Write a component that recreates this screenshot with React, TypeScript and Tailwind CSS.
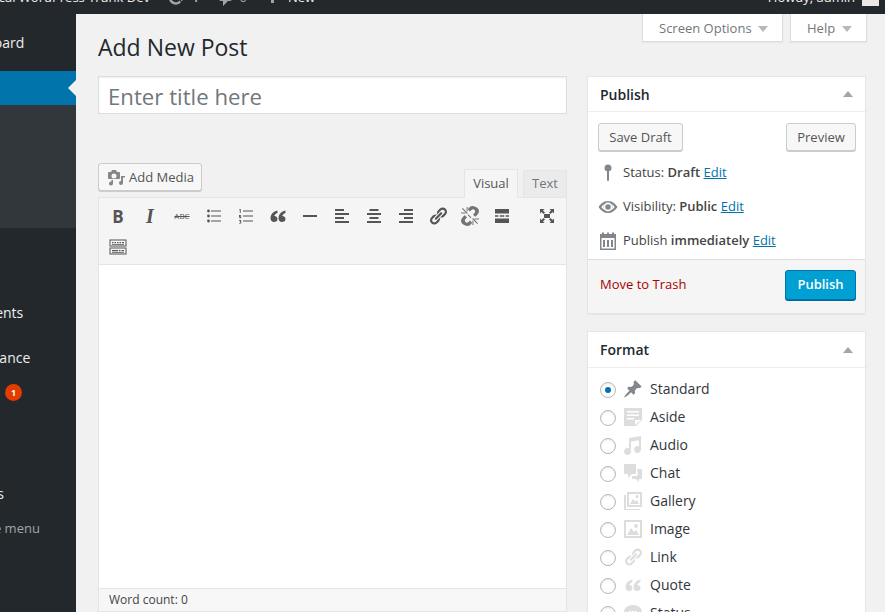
import type { ReactNode } from 'react';

const sans = { fontFamily: '"Open Sans", sans-serif' };

function Ic({ size = 20, className = '', children }: { size?: number; className?: string; children: ReactNode }) {
  return (
    <svg width={size} height={size} viewBox="0 0 20 20" fill="currentColor" className={className}>
      {children}
    </svg>
  );
}

const LINK = 'M17.74 2.76c1.68 1.69 1.68 4.41 0 6.1l-1.53 1.52c-1.12 1.12-2.7 1.47-4.14 1.09l2.62-2.61.76-.77.76-.76c.84-.84.84-2.2 0-3.04-.84-.85-2.2-.85-3.04 0l-.77.76-3.38 3.38c-.37-1.44-.02-3.02 1.1-4.14l1.52-1.53c1.69-1.68 4.42-1.68 6.1 0zM8.59 13.43l5.34-5.34c.42-.42.42-1.1 0-1.52-.44-.43-1.13-.39-1.53 0l-5.33 5.34c-.42.42-.42 1.1 0 1.52.44.43 1.13.39 1.52 0zm-.76 2.29l4.14-4.15c.38 1.44.03 3.02-1.09 4.14l-1.52 1.53c-1.69 1.68-4.41 1.68-6.1 0-1.68-1.68-1.68-4.42 0-6.1l1.53-1.52c1.12-1.12 2.7-1.47 4.14-1.1l-4.14 4.15c-.85.84-.85 2.2 0 3.05.84.84 2.2.84 3.04 0z';
const QUOTE = 'M9.49 13.22c0-2.32-1.63-3.21-3.2-3.31.44-1.3 1.49-2.38 3.17-3.02V4.5C5.4 5.4 2.5 8.4 2.5 12.3c0 2.3 1.5 3.7 3.5 3.7 1.9 0 3.49-1.1 3.49-2.78zm8 0c0-2.32-1.63-3.21-3.2-3.31.44-1.3 1.49-2.38 3.17-3.02V4.5c-4.06.9-6.96 3.9-6.96 7.8 0 2.3 1.5 3.7 3.5 3.7 1.9 0 3.49-1.1 3.49-2.78z';

function AlignIcon({ mode }: { mode: 'l' | 'c' | 'r' }) {
  const rows = [[3, 9], [7, 14], [11, 9], [15, 14]];
  return (
    <Ic>
      {rows.map(([y, w]) => (
        <rect key={y} x={mode === 'l' ? 3 : mode === 'r' ? 17 - w : 10 - w / 2} y={y} width={w} height={2} />
      ))}
    </Ic>
  );
}

const toolbarIcon: ReactNode[] = [
  <span key="b" className="font-bold text-[17px] leading-none">B</span>,
  <span key="i" className="italic font-bold text-[20px] leading-none" style={{ fontFamily: '"Liberation Serif", serif' }}>I</span>,
  <span key="abc" className="text-[8px] leading-none line-through">ABC</span>,
  <Ic key="ul"><circle cx="4.5" cy="5" r="1.4" /><circle cx="4.5" cy="10" r="1.4" /><circle cx="4.5" cy="15" r="1.4" /><path d="M7 4.4h10v1.2H7zM7 9.4h10v1.2H7zM7 14.4h10v1.2H7z" /></Ic>,
  <Ic key="ol"><path d="M7 4.4h10v1.2H7zM7 9.4h10v1.2H7zM7 14.4h10v1.2H7z" /><path d="M3.5 3h1.2v4H3.8V4H3.3zM3 9h2.2v.8H4v.5h1.2v2H3v-.7h1.3v-.6H3zM3 14h2.2v3.6H3v-.7h1.3v-.7H3.6v-.6h.7v-.8H3z" /></Ic>,
  <Ic key="q"><path d={QUOTE} /></Ic>,
  <Ic key="hr"><rect x="3" y="9" width="14" height="2" /></Ic>,
  <AlignIcon key="al" mode="l" />,
  <AlignIcon key="ac" mode="c" />,
  <AlignIcon key="ar" mode="r" />,
  <Ic key="ln"><path d={LINK} /></Ic>,
  <Ic key="un" className="opacity-80">
    <path d="M17.74 2.26c1.68 1.69 1.68 4.41 0 6.1l-1.53 1.52c-.32.33-.69.58-1.08.77L13 8.51l1.52-1.52c.84-.84.84-2.2 0-3.04-.84-.85-2.2-.85-3.04 0L9.95 5.47 7.83 3.35c.19-.4.44-.76.77-1.09l1.52-1.52c1.69-1.68 5.94-.16 7.62 1.52zM2.26 17.74c-1.68-1.69-1.68-4.41 0-6.1l1.53-1.52c.32-.33.69-.58 1.08-.77L7 11.49l-1.52 1.52c-.84.84-.84 2.2 0 3.04.84.85 2.2.85 3.04 0l1.53-1.52 2.12 2.12c-.19.4-.44.76-.77 1.09l-1.52 1.52c-1.69 1.68-5.94.16-7.62-1.52z" />
    <path d="M2 2.800L2.800 2l5 5.200-.8.8zM6.600 1h1v4.500h-1zM1 6.400h4.500v1H1zM18 17.200l-.8.8-5-5.200.8-.8zM12.400 14.500h1V19h-1zM14.500 12.600H19v1h-4.500zM8.500 8.500l3 3-.8.8-3-3z" />
  </Ic>,
  <Ic key="more"><path d="M3 3h14v4.400H3zM3 9.300h3.400v1.400H3zM7.800 9.300h4.400v1.400H7.800zM13.600 9.300H17v1.400h-3.400zM3 12.600h14V17H3z" /></Ic>,
];

function Sink() {
  return (
    <Ic>
      <path d="M1.500 2.500h17v7h-17zm1 1v5h15v-5zM1.500 10.500h17v7h-17zm1 1v5h15v-5z" fillRule="evenodd" />
      <path d="M4 5h1.500v1.300H4zM6.500 5H8v1.300H6.500zM9 5h1.500v1.300H9zM11.500 5H13v1.300h-1.500zM14 5h2v1.300h-2zM4 7h12v.8H4zM4 13h6v1.300H4zM11 13h1.500v1.300H11zM13.500 13H16v1.300h-2.500zM4 15h12v.8H4z" />
    </Ic>
  );
}

const formats: [string, ReactNode, boolean?][] = [
  ['Standard', <path key="s" d="M10.440 3.020l1.820-1.820 6.360 6.350-1.830 1.820c-1.050-.68-2.480-.57-3.410.36l-.75.75c-.92.93-1.040 2.350-.35 3.410l-1.830 1.820-2.410-2.410-2.800 2.790c-.42.42-3.380 2.710-3.800 2.290s1.860-3.390 2.280-3.810l2.790-2.790L4.100 9.360l1.830-1.820c1.050.69 2.480.57 3.400-.36l.75-.75c.93-.92 1.050-2.350.36-3.410z" />, true],
  ['Aside', <path key="a" d="M1 1h18v12l-6 6H1V1zm3 3v1.500h12V4H4zm0 3.500V9h12V7.500H4zM4 11v1.500h7V11H4zm8 7l6-5h-6v5z" fillRule="evenodd" />],
  ['Audio', <path key="au" d="M18 1v13.500c0 1.930-1.570 3.500-3.500 3.500S11 16.430 11 14.500s1.570-3.500 3.500-3.500c.53 0 1.030.12 1.500.33V5.200L8 6.600v9.900c0 1.930-1.570 3.500-3.500 3.500S1 18.430 1 16.500 2.570 13 4.500 13c.53 0 1.030.12 1.500.33V3z" />],
  ['Chat', <path key="c" d="M2 1h10a1 1 0 011 1v8a1 1 0 01-1 1H9l-4 4v-4H2a1 1 0 01-1-1V2a1 1 0 011-1zM14 6h4a1 1 0 011 1v8a1 1 0 01-1 1h-2v3l-3-3h-3a1 1 0 01-1-1v-2h4a2 2 0 002-2z" />],
  ['Gallery', <path key="g" d="M4 1h15v15H4V1zm2 2v11h11V3H6zm1 10l3-5 2 2.500 2-1.500 2 4H7zm7-9a1.500 1.500 0 110 3 1.500 1.500 0 010-3zM1 4h2v14h14v1H1V4z" fillRule="evenodd" />],
  ['Image', <path key="i" d="M1 1h18v18H1V1zm2 2v14h14V3H3zm1 13l4-7 3 4 2-2 3 5H4zm9-11a2 2 0 110 4 2 2 0 010-4z" fillRule="evenodd" />],
  ['Link', <path key="l" d={LINK} />],
  ['Quote', <path key="q" d={QUOTE} />],
  ['Status', <path key="st" d="M10 2c5 0 9 2.900 9 7s-4 7-9 7c-.9 0-1.800-.1-2.600-.3L3 18.500l.8-4.300C2 12.900 1 11 1 9c0-4.100 4-7 9-7zM6 8v2h2V8zm3 0v2h2V8zm3 0v2h2V8z" fillRule="evenodd" />],
];

function Caret({ up, className = '' }: { up?: boolean; className?: string }) {
  return (
    <span
      className={`w-0 h-0 border-x-[5px] border-x-transparent ${up ? 'border-b-[6px] border-b-[#a0a5aa]' : 'border-t-[6px] border-t-[#b4b9be]'} ${className}`}
    />
  );
}

function MiscRow({ icon, children }: { icon: ReactNode; children: ReactNode }) {
  return (
    <div className="h-[34px] flex items-center text-[13px] text-[#444]">
      <span className="w-[24px] -ml-[1px] mr-[3px] flex justify-center text-[#82878c]">{icon}</span>
      <span>{children}</span>
    </div>
  );
}

const wpButton = 'border border-[#ccc] rounded-[3px] bg-[#f7f7f7] text-[#555] text-[13px] shadow-[0_1px_0_#ccc] flex items-center';

export default function App() {
  return (
    <div className="w-[885px] h-[612px] overflow-hidden flex flex-col bg-[#f1f1f1] text-[#444]" style={sans}>
      <div className="h-[14px] shrink-0 overflow-hidden bg-[#23282d] text-[#eee] text-[13px]">
        <div className="h-[32px] -mt-[18px] flex items-center whitespace-nowrap">
          <span className="ml-[-23px] w-[173px] text-right">Local WordPress Trunk Dev</span>
          <Ic size={20} className="ml-[16px] text-[#a0a5aa]">
            <path d="M10.200 3.280c3.530 0 6.430 2.610 6.920 6h2.080l-3.500 4-3.500-4h2.320c-.45-1.970-2.210-3.440-4.320-3.440-1.450 0-2.730.71-3.540 1.780L4.950 5.660C6.230 4.200 8.110 3.280 10.200 3.280zm-.4 13.440c-3.520 0-6.430-2.610-6.920-6H.8l3.500-4c1.170 1.330 2.330 2.670 3.500 4H5.480c.45 1.970 2.210 3.440 4.320 3.440 1.450 0 2.730-.71 3.540-1.780l1.710 1.950c-1.280 1.460-3.150 2.390-5.250 2.390z" />
          </Ic>
          <span className="ml-[6px]">1</span>
          <Ic size={20} className="ml-[17px] text-[#a0a5aa]">
            <path d="M5 2h9c1.100 0 2 .9 2 2v7c0 1.100-.9 2-2 2h-2l-5 5v-5H5c-1.100 0-2-.9-2-2V4c0-1.100.9-2 2-2z" />
          </Ic>
          <span className="ml-[3px] text-[#a0a5aa]">0</span>
          <Ic size={20} className="ml-[15px] text-[#a0a5aa]">
            <path d="M17 7v3h-5v5H9v-5H4V7h5V2h3v5h5z" />
          </Ic>
          <span className="ml-[6px]">New</span>
          <span className="ml-auto">Howdy, admin</span>
          <span className="ml-[7px] mr-[6px] w-[17px] h-[16px] bg-[#e8e8e8] self-start mt-[8px]" />
        </div>
      </div>
      <div className="flex-1 flex min-h-0">
        <aside className="w-[76px] shrink-0 overflow-hidden bg-[#23282d] text-[#eee] text-[14px]">
          <div className="w-[160px] -ml-[84px] whitespace-nowrap">
            <div className="h-[57px] pl-[36px] pt-[18px] leading-[22px]">Dashboard</div>
            <div className="h-[34px] bg-[#0073aa] flex justify-end items-center">
              <span className="w-0 h-0 border-y-[8px] border-y-transparent border-r-[8px] border-r-[#f1f1f1]" />
            </div>
            <div className="h-[123px] bg-[#32373c]" />
            <div className="h-[74px] pl-[36px] pt-[74px] leading-[22px]">Comments</div>
            <div className="h-[45px] pl-[36px] pt-[45px] leading-[22px]">Appearance</div>
            <div className="h-[34px] mt-[29px] pl-[36px] flex items-center relative">
              <span>Plugins</span>
              <span className="absolute left-[89px] top-[8px] w-[17px] h-[17px] rounded-full bg-[#e43b00] text-white text-[9px] font-bold flex items-center justify-center">1</span>
            </div>
            <div className="mt-[73px] pl-[36px] leading-[22px]">Settings</div>
            <div className="mt-[12px] pl-[34px] text-[13px] leading-[22px] text-[#a0a5aa]">Collapse menu</div>
          </div>
        </aside>
        <main className="flex-1 min-w-0 relative pl-[22px] pr-[18px]">
          <div className="absolute top-0 right-[18px] flex gap-[7px] text-[13px] text-[#72777c]">
            <div className="h-[28px] w-[141px] pl-[16px] pt-[2px] bg-white border border-t-0 border-[#ddd] flex items-center gap-[6px] shadow-[0_1px_1px_rgba(0,0,0,0.04)]">
              Screen Options<Caret />
            </div>
            <div className="h-[28px] w-[77px] pl-[16px] pt-[2px] bg-white border border-t-0 border-[#ddd] flex items-center gap-[7px] shadow-[0_1px_1px_rgba(0,0,0,0.04)]">
              Help<Caret />
            </div>
          </div>
          <h1 className="pt-[18px] h-[62px] text-[23px] leading-[31px] text-[#23282d]">Add New Post</h1>
          <div className="flex gap-[20px] items-start">
            <div className="w-[469px] shrink-0">
              <div className="h-[38px] bg-white border border-[#ddd] pl-[9px] pt-[3px] flex items-center text-[22.2px] text-[#72777c] shadow-[inset_0_1px_2px_rgba(0,0,0,0.07)]">
                Enter title here
              </div>
              <div className="h-[72px] mt-[11px] flex items-end justify-between">
                <div className={`${wpButton} h-[28px] w-[104px] mb-[6px] pl-[7px] pt-[1px] gap-[3px]`}>
                  <Ic size={20} className="text-[#82878c]">
                    <path d="M3 4h2l1-2h4l1 2h2a1 1 0 011 1v5a1 1 0 01-1 1H3a1 1 0 01-1-1V5a1 1 0 011-1zm5 1.500A2.500 2.500 0 108 10.500a2.500 2.500 0 000-5zM15 8h4v1.500h-2V15a2 2 0 11-2-2zM7 12v3.500a2 2 0 11-1.500-1.900V12z" fillRule="evenodd" />
                  </Ic>
                  Add Media
                </div>
                <div className="flex items-end gap-[5px] text-[13px]">
                  <div className="h-[29px] w-[54px] bg-[#f5f5f5] border border-b-0 border-[#e5e5e5] flex items-center justify-center text-[#555] relative top-[1px]">Visual</div>
                  <div className="h-[27px] w-[44px] bg-[#ebebeb] border border-b-0 border-[#e5e5e5] flex items-center justify-center text-[#72777c]">Text</div>
                </div>
              </div>
              <div className="border border-[#e5e5e5] bg-white h-[415px] flex flex-col">
                <div className="h-[67px] shrink-0 bg-[#f5f5f5] border-b border-[#e5e5e5] text-[#555]">
                  <div className="relative flex h-[37px] pl-[3px] pt-[2px]">
                    {toolbarIcon.map((icon, i) => (
                      <span key={i} className="w-[32px] h-[32px] flex items-center justify-center">{icon}</span>
                    ))}
                    <span className="absolute right-[3px] top-[2px] w-[32px] h-[32px] flex items-center justify-center">
                      <Ic><path d="M7 8h6v4H7zM3 3h4.500L6 4.500l2 2L6.500 8l-2-2L3 7.500zM17 3v4.500L15.500 6l-2 2L12 6.500l2-2L12.500 3zM3 17v-4.500L4.500 14l2-2L8 13.500l-2 2L7.500 17zM17 17h-4.500l1.500-1.500-2-2 1.500-1.500 2 2 1.500-1.500z" /></Ic>
                    </span>
                  </div>
                  <div className="flex pl-[3px]">
                    <span className="w-[32px] h-[24px] flex items-center justify-center"><Sink /></span>
                  </div>
                </div>
                <div className="flex-1 bg-white" />
                <div className="h-[23px] shrink-0 bg-[#f7f7f7] border-t border-[#e5e5e5] pl-[10px] flex items-center text-[12px] text-[#444]">Word count: 0</div>
              </div>
            </div>
            <div className="w-[279px] shrink-0 flex flex-col gap-[17px]">
              <section className="bg-white border border-[#e5e5e5] shadow-[0_1px_1px_rgba(0,0,0,0.04)]">
                <div className="h-[35px] border-b border-[#eee] px-[12px] flex items-center justify-between text-[14px] font-semibold text-[#23282d]">
                  Publish<Caret up />
                </div>
                <div className="pl-[10px] pr-[9px] pt-[11px] flex justify-between">
                  <div className={`${wpButton} h-[28px] w-[85px] justify-center pt-[1px]`}>Save Draft</div>
                  <div className={`${wpButton} h-[28px] w-[70px] justify-center pt-[1px]`}>Preview</div>
                </div>
                <div className="pl-[9px] pt-[5px] pb-[1px]">
                  <MiscRow icon={<Ic size={20}><path d="M10 1.500a3.500 3.500 0 011 6.850V17l-1 1.500L9 17V8.350A3.500 3.500 0 0110 1.500z" /></Ic>}>
                    Status: <b className="font-semibold">Draft</b> <a className="text-[#0073aa] underline">Edit</a>
                  </MiscRow>
                  <MiscRow icon={<Ic size={22}><path d="M10 4.500c4.200 0 7.300 3.200 8.500 5.500-1.200 2.300-4.300 5.500-8.500 5.500S2.700 12.300 1.500 10C2.700 7.700 5.800 4.500 10 4.500zM10 6a4 4 0 100 8 4 4 0 000-8zM4 10c.7 1.100 1.500 2.100 2.700 2.900a5.500 5.500 0 010-5.800A9 9 0 004 10zm12 0a9 9 0 00-2.700-2.900 5.500 5.500 0 010 5.800c1.200-.8 2-1.800 2.700-2.900zM10 7.500a2.500 2.500 0 110 5 2.500 2.500 0 010-5z" fillRule="evenodd" /></Ic>}>
                    Visibility: <b className="font-semibold">Public</b> <a className="text-[#0073aa] underline">Edit</a>
                  </MiscRow>
                  <MiscRow icon={<Ic size={20}><path d="M2 3h2V1.500h2V3h3V1.500h2V3h3V1.500h2V3h2v16H2zm1.500 4v10.500h13V7zM5 9h2v7H5zm4 0h2v7H9zm4 0h2v7h-2z" fillRule="evenodd" /></Ic>}>
                    Publish <b className="font-semibold">immediately</b> <a className="text-[#0073aa] underline">Edit</a>
                  </MiscRow>
                </div>
                <div className="h-[54px] bg-[#f5f5f5] border-t border-[#ddd] pl-[12px] pr-[9px] pt-[10px] flex items-start justify-between">
                  <a className="text-[13px] text-[#a00] mt-[5px]">Move to Trash</a>
                  <div className="h-[30px] w-[71px] rounded-[3px] bg-[#00a0d2] border border-[#0073aa] text-white text-[13px] font-semibold flex items-center justify-center shadow-[0_1px_0_#006799]">Publish</div>
                </div>
              </section>
              <section className="bg-white border border-[#e5e5e5] shadow-[0_1px_1px_rgba(0,0,0,0.04)]">
                <div className="h-[36px] border-b border-[#eee] px-[12px] flex items-center justify-between text-[14px] font-semibold text-[#23282d]">
                  Format<Caret up />
                </div>
                <div className="pl-[12px] pt-[8px] pb-[10px]">
                  {formats.map(([label, path, checked]) => (
                    <div key={label} className="h-[28px] flex items-center text-[14px] text-[#32373c]">
                      <span className="w-[16px] h-[16px] rounded-full border border-[#b4b9be] bg-white flex items-center justify-center shadow-[inset_0_1px_2px_rgba(0,0,0,0.1)]">
                        {checked && <span className="w-[6px] h-[6px] rounded-full bg-[#0073aa]" />}
                      </span>
                      <Ic size={20} className={`ml-[7px] mr-[7px] -mt-[2px] ${checked ? 'text-[#82878c]' : 'text-[#ddd]'}`}>{path}</Ic>
                      <span className="-mt-[4px]">{label}</span>
                    </div>
                  ))}
                </div>
              </section>
            </div>
          </div>
        </main>
      </div>
    </div>
  );
}
